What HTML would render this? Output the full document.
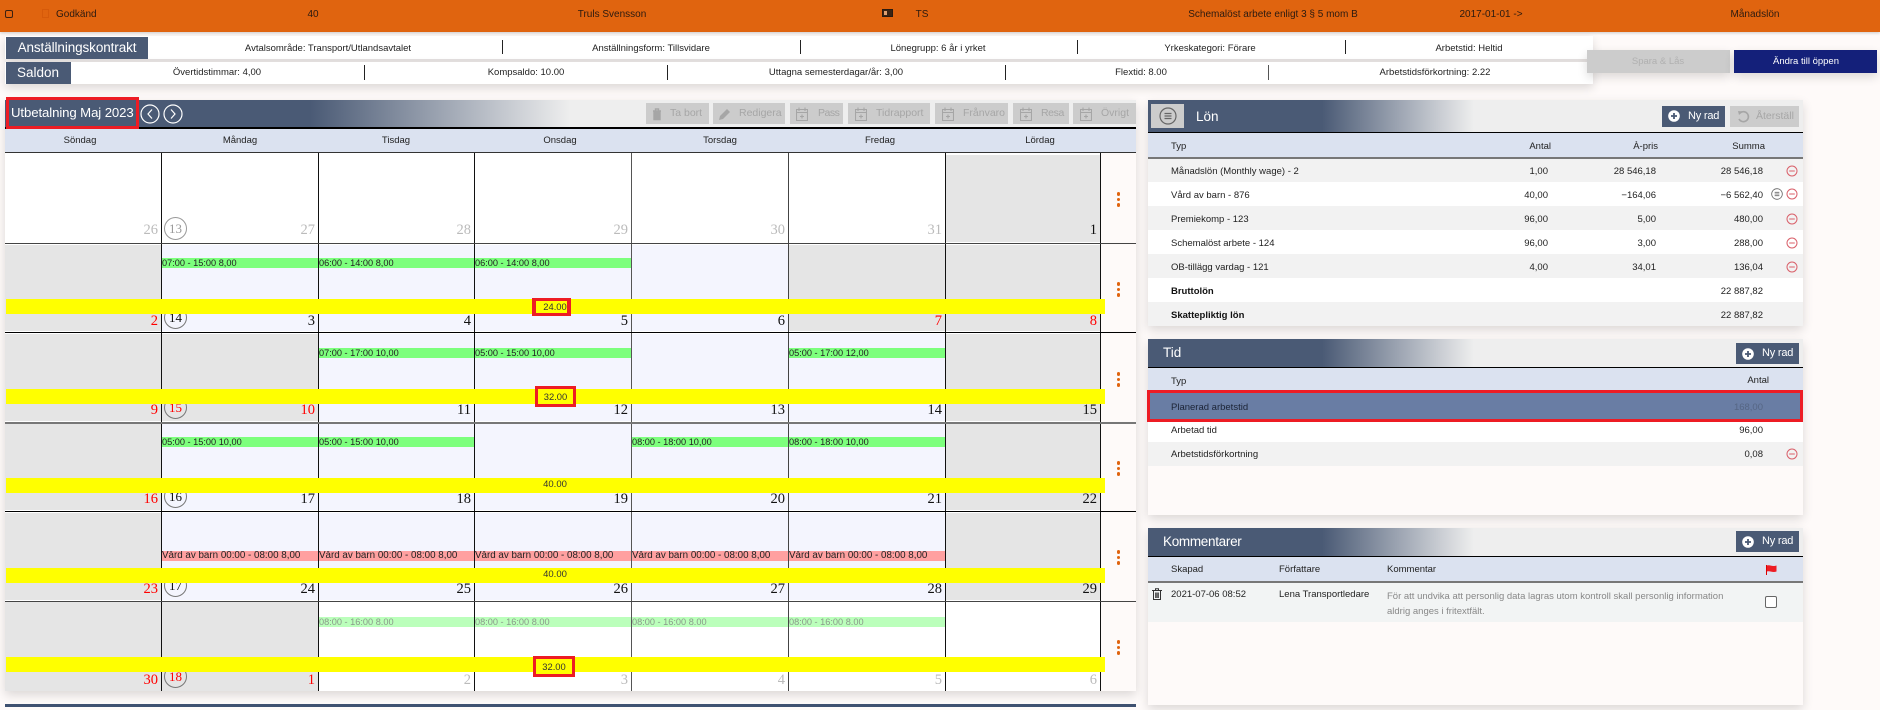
<!DOCTYPE html>
<html lang="sv"><head><meta charset="utf-8"><title>Utbetalning</title>
<style>
html,body{margin:0;padding:0}
body{position:relative;width:1880px;height:710px;overflow:hidden;background:#fefaf9;font-family:"Liberation Sans",sans-serif;color:#222}
div,span,svg{position:absolute;box-sizing:border-box}
.t{white-space:nowrap;line-height:12px;font-size:9.5px;height:12px;margin-top:1px}
.tb{font-size:10px;color:#2a1a10}
.c{transform:translateX(-50%)}
.r{transform:translateX(-100%)}
.gr{background:#e5e5e5}.la{background:#f4f5fe}
.v{width:1px;background:#111;top:153px;height:538px}
.h{height:1px;background:#222;left:5px;width:1131px}
.y{background:#ff0;left:6px;width:1099px;height:14.5px;z-index:5}
.e{height:10px;font-size:9.2px;line-height:10px;color:#222;white-space:nowrap;overflow:hidden;z-index:3}
.g{background:#7dff7d}.p{background:#ffa0a0;font-size:9.8px}.lg{background:#bbffbb;color:#8a9a8a}
.n{font-family:"Liberation Serif",serif;font-size:14.5px;line-height:16px;height:16px;white-space:nowrap;color:#111;transform:translateX(-100%);z-index:3}
.m{color:#bbb}.red{color:#f00}
.w{width:23px;height:23px;border:1px solid #777;border-radius:50%;font-family:"Liberation Serif",serif;font-size:13px;line-height:21px;text-align:center;left:164px;color:#111;background:transparent;z-index:2}
.b{background:#ccc;top:103px;height:21px}
.bt{color:#a6a6a6;font-size:10.5px;line-height:21px;top:103px;white-space:nowrap;height:21px}
.box{border:3px solid #ed1c24;z-index:6;font-size:9.4px;text-align:center;color:#333}
.d{width:3.5px;height:3.5px;border-radius:50%;background:#e0640f;left:1116.5px}
.ph{background:linear-gradient(90deg,#4a5a75 0,#4a5a75 174px,#eeeeee 326px);left:1148px;width:655px}
.th{background:#dbe2f0;left:1148px;width:655px}
.ln{background:#000;left:1148px;width:655px;height:1.5px}
.pt{color:#fff;font-size:13.5px;line-height:16px;height:16px;white-space:nowrap}
.ny{background:#4a5a75;height:21px;width:63px}
.nt{color:#fff;font-size:11px;line-height:21px;height:21px;white-space:nowrap;letter-spacing:-.2px}
.rw{left:1148px;width:655px;height:24px}
.o{background:#f2f2f2}.wh{background:#fff}
.s{box-shadow:0 4px 10px rgba(0,0,0,.14)}
.ic{overflow:visible}
</style></head><body>
<svg width="0" height="0" style="left:0;top:0"><defs>
<symbol id="cal" viewBox="0 0 12 14"><path d="M.5 2.500h11v11H.5zM.5 5.500h11M3 .5v3.500M9 .5v3.500M6 7.500v4M4 9.500h4" fill="none" stroke="#a6a6a6" stroke-width="1.100"/></symbol>
<symbol id="min" viewBox="0 0 12 12"><circle cx="6" cy="6" r="5" fill="none" stroke="#d9606a" stroke-width="1"/><path d="M3.200 6h5.600" stroke="#d9606a" stroke-width="1"/></symbol>
<symbol id="pl" viewBox="0 0 12 12"><circle cx="6" cy="6" r="5.800" fill="#fff"/><path d="M6 3v6M3 6h6" stroke="#4a5a75" stroke-width="1.800"/></symbol>
<symbol id="lst" viewBox="0 0 18 18"><circle cx="9" cy="9" r="8" fill="none" stroke="#666" stroke-width="1.200"/><path d="M5.500 6.500h7M5.500 9h7M5.500 11.500h7" stroke="#666" stroke-width="1.200"/></symbol>
</defs></svg>

<!-- top bar -->
<div style="left:0;top:0;width:1880px;height:32px;background:#e0640f;box-shadow:0 1px 3px rgba(0,0,0,.2)"></div>
<div style="left:5px;top:10px;width:8px;height:8px;border:1px solid #3a2010;border-radius:2px"></div>
<div style="left:42px;top:9px;width:7px;height:9px;border:1px solid #d65a0a"></div>
<div class="t tb" style="left:56px;top:8px">Godkänd</div>
<div class="t tb c" style="left:313px;top:8px">40</div>
<div class="t tb c" style="left:612px;top:8px">Truls Svensson</div>
<div style="left:882px;top:9px;width:11px;height:8px;background:#3a2414;border:1px solid #2a1a10"></div>
<div style="left:884px;top:11px;width:3px;height:4px;background:#e0a070"></div>
<div class="t tb c" style="left:922px;top:8px">TS</div>
<div class="t tb c" style="left:1273px;top:8px">Schemalöst arbete enligt 3 § 5 mom B</div>
<div class="t tb c" style="left:1491px;top:8px">2017-01-01 -&gt;</div>
<div class="t tb c" style="left:1755px;top:8px">Månadslön</div>

<!-- strips -->
<div class="s" style="left:5px;top:36px;width:1588px;height:23px;background:#fff"></div>
<div class="s" style="left:5px;top:62px;width:1588px;height:22px;background:#fff"></div>
<div style="left:6px;top:37px;width:142px;height:22px;background:#4a5a75"></div>
<div style="left:6px;top:62px;width:65px;height:22px;background:#4a5a75"></div>
<div class="t c" style="left:77px;top:39px;height:16px;line-height:16px;font-size:13.500px;color:#fff;letter-spacing:-.1px">Anställningskontrakt</div>
<div class="t c" style="left:38px;top:64px;height:16px;line-height:16px;font-size:13.500px;color:#fff">Saldon</div>

<div class="t c" style="left:328px;top:42px">Avtalsområde: Transport/Utlandsavtalet</div>
<div style="left:502px;top:40px;width:1px;height:14px;background:#222"></div>
<div class="t c" style="left:651px;top:42px">Anställningsform: Tillsvidare</div>
<div style="left:800px;top:40px;width:1px;height:14px;background:#222"></div>
<div class="t c" style="left:938px;top:42px">Lönegrupp: 6 år i yrket</div>
<div style="left:1077px;top:40px;width:1px;height:14px;background:#222"></div>
<div class="t c" style="left:1210px;top:42px">Yrkeskategori: Förare</div>
<div style="left:1345px;top:40px;width:1px;height:14px;background:#222"></div>
<div class="t c" style="left:1469px;top:42px">Arbetstid: Heltid</div>

<div class="t c" style="left:217px;top:66px">Övertidstimmar: 4,00</div>
<div style="left:364px;top:65px;width:1px;height:15px;background:#222"></div>
<div class="t c" style="left:526px;top:66px">Kompsaldo: 10.00</div>
<div style="left:667px;top:65px;width:1px;height:15px;background:#222"></div>
<div class="t c" style="left:836px;top:66px">Uttagna semesterdagar/år: 3,00</div>
<div style="left:1005px;top:65px;width:1px;height:15px;background:#222"></div>
<div class="t c" style="left:1141px;top:66px">Flextid: 8.00</div>
<div style="left:1268px;top:65px;width:1px;height:15px;background:#555"></div>
<div class="t c" style="left:1435px;top:66px">Arbetstidsförkortning: 2.22</div>

<div class="s" style="left:1587px;top:50px;width:143px;height:23px;background:#ccc"></div>
<div class="t c" style="left:1658px;top:55px;color:#b0b0b0">Spara &amp; Lås</div>
<div class="s" style="left:1734px;top:50px;width:143px;height:23px;background:#14207a"></div>
<div class="t c" style="left:1806px;top:55px;color:#fff">Ändra till öppen</div>

<!-- calendar -->
<div class="s" style="left:5px;top:100px;width:1131px;height:591px;background:#fefaf9"></div>
<div style="left:5px;top:100px;width:1131px;height:27px;background:linear-gradient(90deg,#4a5a75 0,#4a5a75 305px,#eeeeee 565px)"></div>
<div style="left:5px;top:127px;width:1131px;height:1.500px;background:#000"></div>
<div style="left:6px;top:97px;width:133px;height:32px;border:3px solid #ed1c24;background:#4a5a75;z-index:6"></div>
<div class="t" style="left:11px;top:104px;height:16px;line-height:16px;font-size:13.200px;color:#fff;z-index:7;letter-spacing:-.1px">Utbetalning Maj 2023</div>
<svg class="ic" style="left:140px;top:104px" width="20" height="20"><circle cx="10" cy="10" r="9" fill="none" stroke="#fff" stroke-width="1.200"/><path d="M12 5.500L8 10l4 4.500" fill="none" stroke="#fff" stroke-width="1.200"/></svg>
<svg class="ic" style="left:163px;top:104px" width="20" height="20"><circle cx="10" cy="10" r="9" fill="none" stroke="#fff" stroke-width="1.200"/><path d="M8 5.500l4 4.500-4 4.500" fill="none" stroke="#fff" stroke-width="1.200"/></svg>

<div class="b" style="left:646px;width:63px"></div>
<svg class="ic" style="left:652px;top:108px" width="10" height="12" viewBox="0 0 10 12"><path d="M1 3h8M3.500 3V1h3v2M2 3v8.500h6V3" fill="none" stroke="#a6a6a6" stroke-width="1.400"/><rect x="2" y="3" width="6" height="8" fill="#a6a6a6"/></svg>
<div class="bt" style="left:670px">Ta bort</div>
<div class="b" style="left:713px;width:72px"></div>
<svg class="ic" style="left:719px;top:108px" width="12" height="12" viewBox="0 0 12 12"><path d="M0 12l1-4L8 1l3 3-7 7z" fill="#a6a6a6"/></svg>
<div class="bt" style="left:739px">Redigera</div>
<div class="b" style="left:790px;width:53px"></div>
<svg class="ic" style="left:796px;top:107px" width="12" height="14"><use href="#cal"/></svg>
<div class="bt" style="left:818px;letter-spacing:-.5px">Pass</div>
<div class="b" style="left:848px;width:82px"></div>
<svg class="ic" style="left:855px;top:107px" width="12" height="14"><use href="#cal"/></svg>
<div class="bt" style="left:876px">Tidrapport</div>
<div class="b" style="left:935px;width:73px"></div>
<svg class="ic" style="left:942px;top:107px" width="12" height="14"><use href="#cal"/></svg>
<div class="bt" style="left:963px">Frånvaro</div>
<div class="b" style="left:1013px;width:56px"></div>
<svg class="ic" style="left:1020px;top:107px" width="12" height="14"><use href="#cal"/></svg>
<div class="bt" style="left:1041px;letter-spacing:-.4px">Resa</div>
<div class="b" style="left:1073px;width:63px"></div>
<svg class="ic" style="left:1080px;top:107px" width="12" height="14"><use href="#cal"/></svg>
<div class="bt" style="left:1101px">Övrigt</div>

<div style="left:5px;top:129px;width:1131px;height:24px;background:#dbe2f0;border-bottom:1px solid #333"></div>
<div class="t c" style="left:80px;top:134px">Söndag</div>
<div class="t c" style="left:240px;top:134px">Måndag</div>
<div class="t c" style="left:396px;top:134px">Tisdag</div>
<div class="t c" style="left:560px;top:134px">Onsdag</div>
<div class="t c" style="left:720px;top:134px">Torsdag</div>
<div class="t c" style="left:880px;top:134px">Fredag</div>
<div class="t c" style="left:1040px;top:134px">Lördag</div>

<!-- cell bgs -->
<div style="left:5px;top:153px;width:1095px;height:538px;background:#fff"></div>
<div class="gr" style="left:946px;top:155px;width:154px;height:87px"></div>

<div class="gr" style="left:5px;top:245px;width:156px;height:86px"></div>
<div class="la" style="left:162px;top:245px;width:626px;height:86px"></div>
<div class="gr" style="left:789px;top:245px;width:311px;height:86px"></div>

<div class="gr" style="left:5px;top:334px;width:156px;height:87px"></div>
<div class="gr" style="left:162px;top:334px;width:156px;height:87px"></div>
<div class="la" style="left:319px;top:334px;width:626px;height:87px"></div>
<div class="gr" style="left:946px;top:334px;width:154px;height:87px"></div>

<div class="gr" style="left:5px;top:424px;width:156px;height:86px"></div>
<div class="la" style="left:162px;top:424px;width:783px;height:86px"></div>
<div class="gr" style="left:946px;top:424px;width:154px;height:86px"></div>

<div class="gr" style="left:5px;top:513px;width:156px;height:87px"></div>
<div class="la" style="left:162px;top:513px;width:783px;height:87px"></div>
<div class="gr" style="left:946px;top:513px;width:154px;height:87px"></div>

<div class="gr" style="left:5px;top:602px;width:156px;height:89px"></div>
<div class="gr" style="left:162px;top:602px;width:156px;height:89px"></div>

<!-- lines -->
<div class="v" style="left:161px"></div><div class="v" style="left:318px"></div><div class="v" style="left:474px"></div><div class="v" style="left:631px;background:#555"></div><div class="v" style="left:788px;background:#444"></div><div class="v" style="left:945px"></div><div class="v" style="left:1100px"></div>
<div class="h" style="top:243px;background:#444"></div><div class="h" style="top:332px;background:#000"></div><div class="h" style="top:422px;height:2px;background:#777"></div><div class="h" style="top:511px;background:#000"></div><div class="h" style="top:601px;background:#444"></div>

<!-- yellow -->
<div class="y" style="top:299px"></div><div class="y" style="top:389px"></div><div class="y" style="top:478px"></div><div class="y" style="top:568px"></div><div class="y" style="top:657px"></div>

<!-- dots -->
<div class="d" style="top:192px"></div><div class="d" style="top:197.500px"></div><div class="d" style="top:203px"></div>
<div class="d" style="top:282px"></div><div class="d" style="top:287.500px"></div><div class="d" style="top:293px"></div>
<div class="d" style="top:372px"></div><div class="d" style="top:377.500px"></div><div class="d" style="top:383px"></div>
<div class="d" style="top:461px"></div><div class="d" style="top:466.500px"></div><div class="d" style="top:472px"></div>
<div class="d" style="top:550px"></div><div class="d" style="top:555.500px"></div><div class="d" style="top:561px"></div>
<div class="d" style="top:640px"></div><div class="d" style="top:645.500px"></div><div class="d" style="top:651px"></div>

<!-- week circles -->
<div class="w" style="top:217px;color:#999;border-color:#999">13</div>
<div class="w" style="top:306px">14</div>
<div class="w" style="top:396px;color:#f00">15</div>
<div class="w" style="top:485px">16</div>
<div class="w" style="top:574px">17</div>
<div class="w" style="top:665px;color:#f00">18</div>

<!-- numbers -->
<div class="n m" style="left:158px;top:222px">26</div><div class="n m" style="left:315px;top:222px">27</div><div class="n m" style="left:471px;top:222px">28</div><div class="n m" style="left:628px;top:222px">29</div><div class="n m" style="left:785px;top:222px">30</div><div class="n m" style="left:942px;top:222px">31</div><div class="n" style="left:1097px;top:222px">1</div>
<div class="n red" style="left:158px;top:313px">2</div><div class="n" style="left:315px;top:313px">3</div><div class="n" style="left:471px;top:313px">4</div><div class="n" style="left:628px;top:313px">5</div><div class="n" style="left:785px;top:313px">6</div><div class="n red" style="left:942px;top:313px">7</div><div class="n red" style="left:1097px;top:313px">8</div>
<div class="n red" style="left:158px;top:402px">9</div><div class="n red" style="left:315px;top:402px">10</div><div class="n" style="left:471px;top:402px">11</div><div class="n" style="left:628px;top:402px">12</div><div class="n" style="left:785px;top:402px">13</div><div class="n" style="left:942px;top:402px">14</div><div class="n" style="left:1097px;top:402px">15</div>
<div class="n red" style="left:158px;top:491px">16</div><div class="n" style="left:315px;top:491px">17</div><div class="n" style="left:471px;top:491px">18</div><div class="n" style="left:628px;top:491px">19</div><div class="n" style="left:785px;top:491px">20</div><div class="n" style="left:942px;top:491px">21</div><div class="n" style="left:1097px;top:491px">22</div>
<div class="n red" style="left:158px;top:581px">23</div><div class="n" style="left:315px;top:581px">24</div><div class="n" style="left:471px;top:581px">25</div><div class="n" style="left:628px;top:581px">26</div><div class="n" style="left:785px;top:581px">27</div><div class="n" style="left:942px;top:581px">28</div><div class="n" style="left:1097px;top:581px">29</div>
<div class="n red" style="left:158px;top:672px">30</div><div class="n red" style="left:315px;top:672px">1</div><div class="n m" style="left:471px;top:672px">2</div><div class="n m" style="left:628px;top:672px">3</div><div class="n m" style="left:785px;top:672px">4</div><div class="n m" style="left:942px;top:672px">5</div><div class="n m" style="left:1097px;top:672px">6</div>

<!-- events -->
<div class="e g" style="left:162px;top:258px;width:156px">07:00 - 15:00 8,00</div>
<div class="e g" style="left:319px;top:258px;width:155px">06:00 - 14:00 8,00</div>
<div class="e g" style="left:475px;top:258px;width:156px">06:00 - 14:00 8,00</div>
<div class="e g" style="left:319px;top:348px;width:155px">07:00 - 17:00 10,00</div>
<div class="e g" style="left:475px;top:348px;width:156px">05:00 - 15:00 10,00</div>
<div class="e g" style="left:789px;top:348px;width:156px">05:00 - 17:00 12,00</div>
<div class="e g" style="left:162px;top:437px;width:156px">05:00 - 15:00 10,00</div>
<div class="e g" style="left:319px;top:437px;width:155px">05:00 - 15:00 10,00</div>
<div class="e g" style="left:632px;top:437px;width:156px">08:00 - 18:00 10,00</div>
<div class="e g" style="left:789px;top:437px;width:156px">08:00 - 18:00 10,00</div>
<div class="e p" style="left:162px;top:551px;width:156px">Vård av barn 00:00 - 08:00 8,00</div>
<div class="e p" style="left:319px;top:551px;width:155px">Vård av barn 00:00 - 08:00 8,00</div>
<div class="e p" style="left:475px;top:551px;width:156px">Vård av barn 00:00 - 08:00 8,00</div>
<div class="e p" style="left:632px;top:551px;width:156px">Vård av barn 00:00 - 08:00 8,00</div>
<div class="e p" style="left:789px;top:551px;width:156px">Vård av barn 00:00 - 08:00 8,00</div>
<div class="e lg" style="left:319px;top:617px;width:155px">08:00 - 16:00 8.00</div>
<div class="e lg" style="left:475px;top:617px;width:156px">08:00 - 16:00 8.00</div>
<div class="e lg" style="left:632px;top:617px;width:156px">08:00 - 16:00 8.00</div>
<div class="e lg" style="left:789px;top:617px;width:156px">08:00 - 16:00 8.00</div>

<!-- totals -->
<div class="box" style="left:532px;top:298px;width:39px;height:18px;line-height:12px;background:#ff0;border-width:3px 4px;padding-left:7px">24.00</div>
<div class="box" style="left:535px;top:386px;width:41px;height:21px;line-height:15px;background:#ff0">32.00</div>
<div class="t c" style="left:555px;top:478px;z-index:6;color:#333">40.00</div>
<div class="t c" style="left:555px;top:568px;z-index:6;color:#333">40.00</div>
<div class="box" style="left:533px;top:656px;width:42px;height:21px;line-height:15px;background:#ff0">32.00</div>

<!-- bottom bar -->
<div style="left:5px;top:704px;width:1131px;height:3px;background:#3f5170"></div>

<!-- Lön panel -->
<div class="s" style="left:1148px;top:100px;width:655px;height:226px;background:#fff"></div>
<div class="ph" style="top:100px;height:32px"></div>
<div class="ln" style="top:132px"></div>
<div style="left:1151px;top:104px;width:33px;height:24px;background:#ccc"></div>
<svg class="ic" style="left:1159px;top:107px" width="18" height="18"><use href="#lst"/></svg>
<div class="pt" style="left:1196px;top:109px">Lön</div>
<div class="ny" style="left:1662px;top:106px"></div>
<svg class="ic" style="left:1668px;top:110px" width="12" height="12"><use href="#pl"/></svg>
<div class="nt" style="left:1688px;top:106px">Ny rad</div>
<div style="left:1730px;top:106px;width:69px;height:21px;background:#ccc"></div>
<svg class="ic" style="left:1737px;top:110px" width="12" height="12" viewBox="0 0 12 12"><path d="M3 3a5 5 0 1 1-1 6" fill="none" stroke="#a6a6a6" stroke-width="1.600"/><path d="M1 1l5 .5L2 5z" fill="#a6a6a6"/></svg>
<div class="t" style="left:1756px;top:109px;color:#a6a6a6;font-size:10.500px">Återställ</div>

<div class="th" style="top:133px;height:24px"></div>
<div style="left:1148px;top:157px;width:655px;height:2px;background:#777"></div>
<div class="t" style="left:1171px;top:140px">Typ</div>
<div class="t r" style="left:1551px;top:140px">Antal</div>
<div class="t r" style="left:1658px;top:140px">À-pris</div>
<div class="t r" style="left:1765px;top:140px">Summa</div>

<div class="rw o" style="top:159px"></div><div class="rw wh" style="top:182px"></div><div class="rw o" style="top:206px"></div><div class="rw wh" style="top:230px"></div><div class="rw o" style="top:254px"></div><div class="rw wh" style="top:278px"></div><div class="rw o" style="top:302px"></div>

<div class="t" style="left:1171px;top:165px">Månadslön (Monthly wage) - 2</div><div class="t r" style="left:1548px;top:165px">1,00</div><div class="t r" style="left:1656px;top:165px">28 546,18</div><div class="t r" style="left:1763px;top:165px">28 546,18</div>
<div class="t" style="left:1171px;top:189px">Vård av barn - 876</div><div class="t r" style="left:1548px;top:189px">40,00</div><div class="t r" style="left:1656px;top:189px">−164,06</div><div class="t r" style="left:1763px;top:189px">−6 562,40</div>
<div class="t" style="left:1171px;top:213px">Premiekomp - 123</div><div class="t r" style="left:1548px;top:213px">96,00</div><div class="t r" style="left:1656px;top:213px">5,00</div><div class="t r" style="left:1763px;top:213px">480,00</div>
<div class="t" style="left:1171px;top:237px">Schemalöst arbete - 124</div><div class="t r" style="left:1548px;top:237px">96,00</div><div class="t r" style="left:1656px;top:237px">3,00</div><div class="t r" style="left:1763px;top:237px">288,00</div>
<div class="t" style="left:1171px;top:261px">OB-tillägg vardag - 121</div><div class="t r" style="left:1548px;top:261px">4,00</div><div class="t r" style="left:1656px;top:261px">34,01</div><div class="t r" style="left:1763px;top:261px">136,04</div>
<div class="t" style="left:1171px;top:285px;font-weight:bold;color:#111">Bruttolön</div><div class="t r" style="left:1763px;top:285px">22 887,82</div>
<div class="t" style="left:1171px;top:309px;font-weight:bold;color:#111">Skattepliktig lön</div><div class="t r" style="left:1763px;top:309px">22 887,82</div>

<svg class="ic" style="left:1786px;top:165px" width="12" height="12"><use href="#min"/></svg>
<svg class="ic" style="left:1771px;top:188px" width="12" height="12"><use href="#lst"/></svg>
<svg class="ic" style="left:1786px;top:188px" width="12" height="12"><use href="#min"/></svg>
<svg class="ic" style="left:1786px;top:213px" width="12" height="12"><use href="#min"/></svg>
<svg class="ic" style="left:1786px;top:237px" width="12" height="12"><use href="#min"/></svg>
<svg class="ic" style="left:1786px;top:261px" width="12" height="12"><use href="#min"/></svg>

<!-- Tid panel -->
<div class="s" style="left:1148px;top:339px;width:655px;height:176px;background:#fefaf9"></div>
<div class="ph" style="top:339px;height:28px"></div>
<div class="ln" style="top:367px"></div>
<div class="pt" style="left:1163px;top:345px">Tid</div>
<div class="ny" style="left:1736px;top:343px"></div>
<svg class="ic" style="left:1742px;top:348px" width="12" height="12"><use href="#pl"/></svg>
<div class="nt" style="left:1762px;top:343px">Ny rad</div>
<div class="th" style="top:368px;height:22px"></div>
<div class="t" style="left:1171px;top:375px">Typ</div>
<div class="t r" style="left:1769px;top:374px">Antal</div>
<div style="left:1147px;top:390px;width:656px;height:32px;background:#697da4;border:3.500px solid #ed1c24"></div>
<div class="t" style="left:1171px;top:401px;color:#1c2436">Planerad arbetstid</div>
<div class="t r" style="left:1763px;top:401px;color:#566684">168,00</div>
<div class="rw wh" style="top:422px;height:20px"></div>
<div class="rw o" style="top:442px"></div>
<div class="t" style="left:1171px;top:424px">Arbetad tid</div>
<div class="t r" style="left:1763px;top:424px">96,00</div>
<div class="t" style="left:1171px;top:448px">Arbetstidsförkortning</div>
<div class="t r" style="left:1763px;top:448px">0,08</div>
<svg class="ic" style="left:1786px;top:448px" width="12" height="12"><use href="#min"/></svg>

<!-- Kommentarer panel -->
<div class="s" style="left:1148px;top:528px;width:655px;height:177px;background:#fefaf9"></div>
<div class="ph" style="top:528px;height:28px"></div>
<div class="ln" style="top:556px"></div>
<div class="pt" style="left:1163px;top:534px;letter-spacing:-.3px">Kommentarer</div>
<div class="ny" style="left:1736px;top:531px"></div>
<svg class="ic" style="left:1742px;top:536px" width="12" height="12"><use href="#pl"/></svg>
<div class="nt" style="left:1762px;top:531px">Ny rad</div>
<div class="th" style="top:557px;height:24px"></div>
<div style="left:1148px;top:581px;width:655px;height:2px;background:#777"></div>
<div class="t" style="left:1171px;top:563px">Skapad</div>
<div class="t" style="left:1279px;top:563px">Författare</div>
<div class="t" style="left:1387px;top:563px">Kommentar</div>
<svg class="ic" style="left:1766px;top:565px" width="11" height="10" viewBox="0 0 11 10"><path d="M.5 0v10" stroke="#d00" stroke-width="1"/><path d="M1 .5c3-1 5 1.500 9.500 0v6c-4 1.500-6.500-1-9.500 0z" fill="#ed1c24"/></svg>
<div class="rw" style="top:583px;height:39px;background:#f2f4f4"></div>
<svg class="ic" style="left:1152px;top:588px" width="10" height="12" viewBox="0 0 10 12"><path d="M0 2.500h10M3.500 2.500V.7h3v1.800M1.500 2.500v9h7v-9M3.700 4.500v5.500M6.300 4.500v5.500M5 4.500v5.500" fill="none" stroke="#333" stroke-width="1"/></svg>
<div class="t" style="left:1171px;top:588px">2021-07-06 08:52</div>
<div class="t" style="left:1279px;top:588px">Lena Transportledare</div>
<div class="t" style="left:1387px;top:590px;color:#888">För att undvika att personlig data lagras utom kontroll skall personlig information</div>
<div class="t" style="left:1387px;top:605px;color:#888">aldrig anges i fritextfält.</div>
<div style="left:1765px;top:596px;width:12px;height:12px;background:#fff;border:1px solid #666;border-radius:2px"></div>
</body></html>
